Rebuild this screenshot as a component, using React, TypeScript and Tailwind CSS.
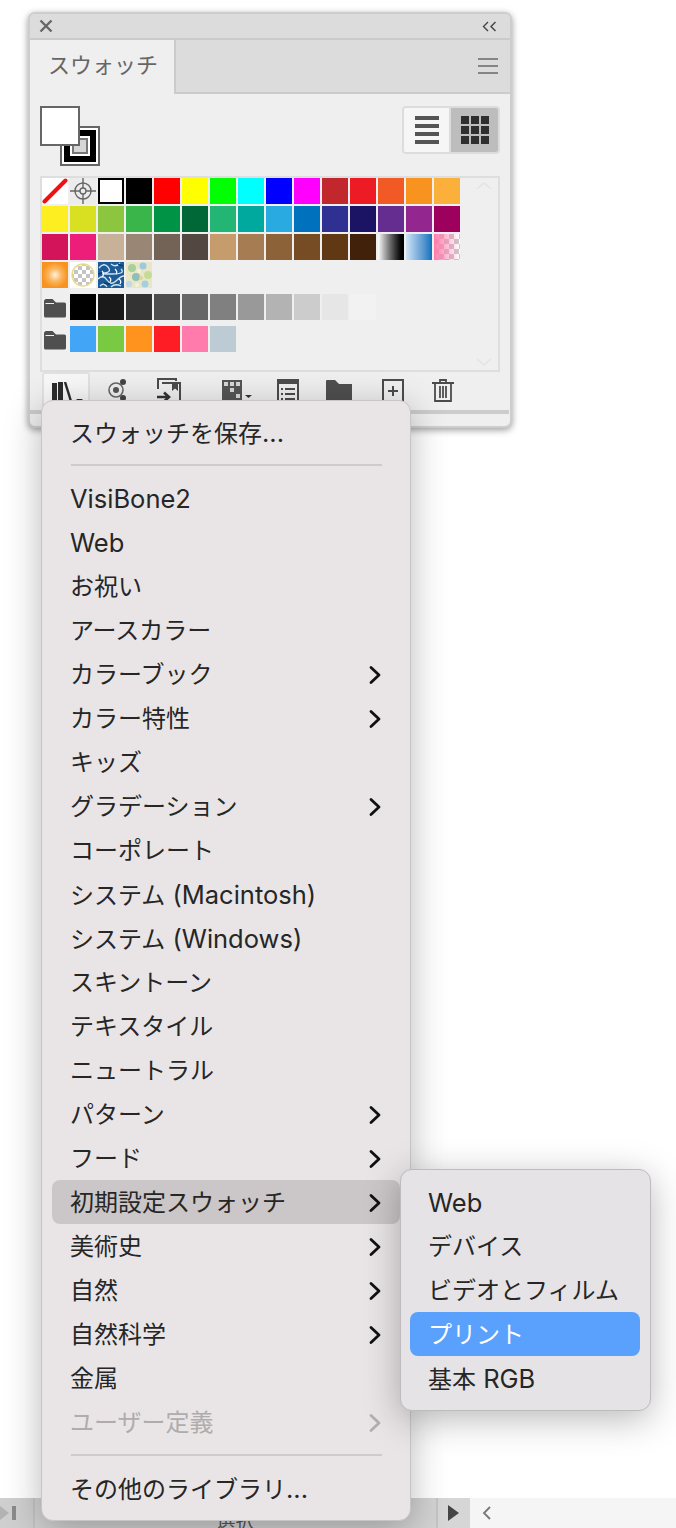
import React from "react";

const rowA = ["bg-[#ff0000]","bg-[#ffff00]","bg-[#00ff00]","bg-[#00ffff]","bg-[#0000ff]","bg-[#ff00ff]","bg-[#c1272d]","bg-[#ed1c24]","bg-[#f15a24]","bg-[#f7931e]","bg-[#fbb03b]"];
const rowB = ["bg-[#fcee21]","bg-[#d9e021]","bg-[#8cc63f]","bg-[#39b54a]","bg-[#009245]","bg-[#006837]","bg-[#22b573]","bg-[#00a99d]","bg-[#29abe2]","bg-[#0071bc]","bg-[#2e3192]","bg-[#1b1464]","bg-[#662d91]","bg-[#93278f]","bg-[#9e005d]"];
const rowC = ["bg-[#d4145a]","bg-[#ed1e79]","bg-[#c7b299]","bg-[#998675]","bg-[#736357]","bg-[#534741]","bg-[#c69c6d]","bg-[#a67c52]","bg-[#8c6239]","bg-[#754c24]","bg-[#603813]","bg-[#42210b]"];
const grays = ["bg-[#000000]","bg-[#1a1a1a]","bg-[#333333]","bg-[#4d4d4d]","bg-[#666666]","bg-[#808080]","bg-[#999999]","bg-[#b3b3b3]","bg-[#cccccc]","bg-[#e6e6e6]","bg-[#f2f2f2]"];
const brights = ["bg-[#42a5f5]","bg-[#7ac943]","bg-[#ff931e]","bg-[#ff1d25]","bg-[#ff7bac]","bg-[#bdccd4]"];

const S = ({ c }: { c: string }) => <div className={`w-[26px] h-[26px] ${c}`} />;

const Checker = ({ a = "#fff", b = "#ccc", s = 6 }: { a?: string; b?: string; s?: number }) => {
  const cells = [];
  for (let y = 0; y < 26; y += s) for (let x = 0; x < 26; x += s) cells.push(<rect key={x + "-" + y} x={x} y={y} width={s} height={s} fill={(x + y) / s % 2 === 0 ? a : b} />);
  return <>{cells}</>;
};

const Folder = () => (
  <svg width="24" height="22" viewBox="0 0 24 22" className="block ml-[1px]">
    <path d="M1 5.5Q1 3 3.5 3H9.5L13 6.5H21.5Q23 6.5 23 8V20Q23 21.5 21.5 21.5H2.5Q1 21.5 1 20Z" fill="#4f4f4f" />
    <path d="M2.5 7.5H11" stroke="#efefef" strokeWidth="1" />
  </svg>
);

const Chevron = ({ dim }: { dim?: boolean }) => (
  <svg width="14" height="20" viewBox="0 0 14 20" className="block">
    <path d="M3 2.5L11 10L3 17.5" fill="none" stroke={dim ? "#b3afb0" : "#111"} strokeWidth="2.8" strokeLinecap="round" strokeLinejoin="round" />
  </svg>
);

const Txt = ({ t }: { t: string }) => (
  <span>
    {t.split(/([A-Za-z0-9 ().]+)/).map((p, i) =>
      i % 2 === 1 ? <span key={i} className="text-[25.5px]">{p}</span> : <span key={i}>{p}</span>
    )}
  </span>
);

const Item = ({ t, sub, active, dim }: { t: string; sub?: boolean; active?: boolean; dim?: boolean }) => (
  <div className={`h-[44px] flex items-center justify-between pl-[18px] pr-[18px] pt-[2px] rounded-[8px] ${active ? "bg-[#cbc6c7]" : ""} ${dim ? "text-[#b0acad]" : "text-[#262626]"}`}>
    <Txt t={t} />
    {sub && <Chevron dim={dim} />}
  </div>
);

const Sep = () => (
  <div className="h-[22px] flex items-center pl-[19px] pr-[18px]">
    <div className="h-[2px] w-full bg-[#cfcbcc]" />
  </div>
);

export default function App() {
  return (
    <div className="relative w-[676px] h-[1528px] overflow-hidden bg-white flex flex-col justify-between font-['Inter','Noto_Sans_CJK_JP',sans-serif]">
      {/* Panel */}
      <div className="ml-[28px] mt-[12px] w-[484px] h-[416px] rounded-[7px] border-2 border-[#cdcdcd] bg-[#efefef] shadow-[0_2px_7px_rgba(0,0,0,0.4)] overflow-hidden flex flex-col">
        <div className="h-[26px] shrink-0 bg-[#dcdcdc] border-b-2 border-[#cbcbcb] flex items-center justify-between pl-[9px] pr-[13px]">
          <svg width="14" height="14" viewBox="0 0 14 14"><path d="M1.5 1.5L12.5 12.5M12.5 1.5L1.5 12.5" stroke="#666" strokeWidth="2.4" /></svg>
          <svg width="15" height="11" viewBox="0 0 15 11"><path d="M6 1L1.5 5.5L6 10M13.5 1L9 5.5L13.5 10" fill="none" stroke="#444" strokeWidth="1.4" /></svg>
        </div>
        <div className="h-[54px] shrink-0 flex">
          <div className="w-[146px] border-r-2 border-[#cbcbcb] bg-[#efefef] pl-[18px] pt-[10px] text-[22px] leading-[30px] text-[#666]">スウォッチ</div>
          <div className="flex-1 bg-[#dcdcdc] border-b-2 border-[#cbcbcb] flex items-center justify-end pr-[12px]">
            <div className="w-[20px] flex flex-col gap-[5px]">
              <div className="h-[2px] bg-[#858585]" /><div className="h-[2px] bg-[#858585]" /><div className="h-[2px] bg-[#858585]" />
            </div>
          </div>
        </div>
        <div className="mt-[12px] mx-[10px] h-[60px] shrink-0 flex justify-between">
          <div className="relative w-[60px] h-[60px]">
            <div className="absolute right-0 bottom-0 w-[40px] h-[40px] border-2 border-[#666] bg-black flex items-center justify-center">
              <div className="w-[36px] h-[36px] border-2 border-white bg-black flex items-center justify-center">
                <div className="w-[20px] h-[20px] border-2 border-white flex items-center justify-center">
                  <div className="w-[16px] h-[16px] border-2 border-[#777] bg-[#d6d6d6]" />
                </div>
              </div>
            </div>
            <div className="absolute left-0 top-0 w-[40px] h-[40px] border-2 border-[#666] bg-white" />
          </div>
          <div className="w-[98px] h-[48px] rounded-[4px] border-2 border-[#dcdcdc] flex overflow-hidden">
            <div className="w-[47px] border-r-2 border-[#dcdcdc] bg-[#f6f6f6] flex flex-col items-center justify-center gap-[4px]">
              <div className="w-[24px] h-[4px] bg-[#555]" /><div className="w-[24px] h-[4px] bg-[#555]" /><div className="w-[24px] h-[4px] bg-[#555]" /><div className="w-[24px] h-[4px] bg-[#555]" />
            </div>
            <div className="flex-1 bg-[#bdbdbd] flex items-center justify-center pl-[1px]">
              <div className="grid grid-cols-[repeat(3,8px)] grid-rows-[repeat(3,8px)] gap-[2px]">
                {Array.from({ length: 9 }).map((_, i) => <div key={i} className="bg-[#2f2f2f]" />)}
              </div>
            </div>
          </div>
        </div>
        {/* swatches */}
        <div className="relative mt-[10px] mx-[10px] h-[196px] shrink-0 border-2 border-[#dedede] flex flex-col">
          <div className="grid grid-cols-[repeat(15,26px)] gap-[2px]">
            <svg width="26" height="26" viewBox="0 0 26 26" className="block bg-white"><path d="M2.5 23.5L23.5 2.5" stroke="#ee1111" strokeWidth="4" strokeLinecap="round" /></svg>
            <svg width="26" height="26" viewBox="0 0 26 26" className="block bg-[#ececec]">
              <circle cx="13" cy="13" r="8" fill="none" stroke="#666" strokeWidth="1.4" />
              <circle cx="13" cy="13" r="3" fill="none" stroke="#666" strokeWidth="1.4" />
              <path d="M13 0V10M13 16V26M0 13H10M16 13H26" stroke="#666" strokeWidth="1.4" />
            </svg>
            <div className="w-[26px] h-[26px] border-[2px] border-black bg-white outline outline-1 -outline-offset-1 outline-black" />
            <S c="bg-black" />
            {rowA.map((c) => <S key={c} c={c} />)}
            {rowB.map((c) => <S key={c} c={c} />)}
            {rowC.map((c) => <S key={c} c={c} />)}
            <S c="bg-gradient-to-r from-white to-black" />
            <S c="bg-gradient-to-r from-[#cfe4f5] to-[#0071bc]" />
            <svg width="26" height="26" viewBox="0 0 26 26" className="block">
              <defs><linearGradient id="pk" x1="0" x2="1" y1="0" y2="0"><stop offset="0" stopColor="#ff7bac" /><stop offset="1" stopColor="#ff7bac" stopOpacity="0" /></linearGradient></defs>
              <Checker a="#fff" b="#c8c8c8" s={5} />
              <rect width="26" height="26" fill="url(#pk)" />
            </svg>
            <div className="w-[26px] h-[26px] bg-[radial-gradient(circle,#fff2df_0%,#fbb65f_35%,#f7931e_70%)]" />
            <svg width="26" height="26" viewBox="0 0 26 26" className="block bg-white">
              <defs><clipPath id="cc"><circle cx="13" cy="13" r="11" /></clipPath></defs>
              <g clipPath="url(#cc)"><Checker a="#fff" b="#c4c4c4" s={4} /></g>
              <circle cx="13" cy="13" r="11" fill="none" stroke="#ecd98a" strokeWidth="1.4" />
            </svg>
            <svg width="26" height="26" viewBox="0 0 26 26" className="block bg-[#1d5b96]">
              <path d="M1 6Q6 0 10 5T7 11T14 12T23 7M0 17Q5 12 9 18T18 19T26 14M13 2Q18 6 22 1M2 24Q6 20 9 25M13 25Q17 21 23 24" fill="none" stroke="#cfe4f5" strokeWidth="1.3" />
              <path d="M17 7Q20 10 18 12M4 9Q7 12 4 15M11 15Q14 17 12 20M21 17Q24 19 22 22" fill="none" stroke="#fff" strokeWidth="1.2" />
              <path d="M0 12L4 11M20 2L25 4M6 21L12 22" stroke="#0d3c6e" strokeWidth="1.5" />
            </svg>
            <svg width="26" height="26" viewBox="0 0 26 26" className="block bg-[#e9e6c8]">
              <circle cx="6" cy="6" r="4" fill="#a9cf9a" /><circle cx="17" cy="4" r="3.5" fill="#9cc9de" />
              <circle cx="22" cy="13" r="4" fill="#c6dc96" /><circle cx="10" cy="15" r="4" fill="#8fbfb6" />
              <circle cx="19" cy="22" r="3.5" fill="#a4cfe3" /><circle cx="3" cy="22" r="3" fill="#bcd8ea" /><circle cx="13" cy="9" r="2" fill="#f4f1d8" />
              <circle cx="11" cy="23" r="2" fill="#f4f1d8" /><circle cx="15" cy="16" r="2" fill="#dcd59a" />
            </svg>
          </div>
          <div className="mt-[6px] flex gap-[2px]">
            <div className="w-[26px] h-[26px] flex items-center"><Folder /></div>
            {grays.map((c) => <S key={c} c={c} />)}
          </div>
          <div className="mt-[6px] flex gap-[2px]">
            <div className="w-[26px] h-[26px] flex items-center"><Folder /></div>
            {brights.map((c) => <S key={c} c={c} />)}
          </div>
          <svg width="16" height="8" viewBox="0 0 16 8" className="absolute right-[6px] top-[4px]"><path d="M1 7L8 1L15 7" fill="none" stroke="#e4e4e4" strokeWidth="1.6" /></svg>
          <svg width="16" height="8" viewBox="0 0 16 8" className="absolute right-[6px] bottom-[4px]"><path d="M1 1L8 7L15 1" fill="none" stroke="#e4e4e4" strokeWidth="1.6" /></svg>
        </div>
        {/* toolbar */}
        <div className="h-[38px] shrink-0 flex pl-[12px] items-end">
          <div className="w-[48px] h-[38px] bg-[#f7f7f7] rounded-[3px] border-2 border-[#e1e1e1] pl-[8px] pt-[8px] overflow-hidden">
            <svg width="32" height="30" viewBox="0 0 32 30" className="block">
              <rect x="0" y="1" width="5" height="28" fill="#2c2c2c" /><rect x="6" y="0" width="5" height="29" fill="#2c2c2c" />
              <path d="M13 0L22 29" stroke="#2c2c2c" strokeWidth="2.4" /><path d="M24 17H31L27.5 20Z" fill="#2c2c2c" />
            </svg>
          </div>
          <div className="h-[38px] flex-1 relative overflow-hidden flex items-start pt-[6px]">
            <svg width="22" height="28" viewBox="0 0 22 28" className="block ml-[18px]">
              <circle cx="8" cy="12" r="7" fill="none" stroke="#666" strokeWidth="1.6" /><circle cx="8" cy="12" r="3" fill="#555" />
              <circle cx="15" cy="4" r="3" fill="#444" /><circle cx="15" cy="20" r="3" fill="#444" />
            </svg>
            <svg width="26" height="28" viewBox="0 0 26 28" className="block ml-[27px]">
              <path d="M1 11V1H19V3M5 5H23V26H14" fill="none" stroke="#4b4b4b" strokeWidth="2" /><path d="M15 5H21V13L18 10.5L15 13Z" fill="#4b4b4b" /><path d="M0 19H10M7 14.5L12 19L7 23.5" fill="none" stroke="#333" strokeWidth="2.6" />
            </svg>
            <svg width="30" height="28" viewBox="0 0 30 28" className="block ml-[39px]">
              <rect x="0" y="2" width="20" height="26" fill="#555" />
              <path d="M2 4h4v4H2zM8 4h4v4H8zM14 4h4v4h-4zM8 10h4v4H8zM14 16h4v4h-4zM8 22h4v4H8z" fill="#d8d8d8" />
              <path d="M23 17H30L26.5 20Z" fill="#333" />
            </svg>
            <svg width="22" height="28" viewBox="0 0 22 28" className="block ml-[25px]">
              <rect x="1" y="2" width="20" height="26" fill="none" stroke="#4b4b4b" strokeWidth="2" /><rect x="1" y="2" width="20" height="4" fill="#4b4b4b" />
              <path d="M4 10h2v2H4zM8 10h10v2H8zM4 15h2v2H4zM8 15h10v2H8zM4 20h2v2H4zM8 20h10v2H8z" fill="#4b4b4b" />
            </svg>
            <svg width="26" height="28" viewBox="0 0 26 28" className="block ml-[27px]">
              <path d="M0 3Q0 2 1 2H9L13 6H26V28H0Z" fill="#4f4f4f" />
            </svg>
            <svg width="22" height="24" viewBox="0 0 22 24" className="block ml-[30px]">
              <rect x="1" y="2" width="20" height="24" fill="none" stroke="#4b4b4b" strokeWidth="2" /><path d="M11 8V18M6 13H16" stroke="#4b4b4b" strokeWidth="2" />
            </svg>
            <svg width="22" height="24" viewBox="0 0 22 24" className="block ml-[28px]">
              <path d="M0 5H22M8 5V2H14V5M3 5V23H19V5M8 8V20M11 8V20M14 8V20" fill="none" stroke="#4b4b4b" strokeWidth="1.8" />
            </svg>
          </div>
        </div>
        <div className="h-[4px] shrink-0 bg-[#cccccc] mr-[1px]" />
      </div>

      {/* Bottom status strip */}
      <div className="h-[30px] shrink-0 flex text-[#555] text-[19px] leading-[24px]">
        <div className="w-[33px] bg-[#cfcfcf] flex items-center">
          <svg width="18" height="14" viewBox="0 0 18 14" className="block shrink-0"><path d="M0 0L9 7L0 14Z" fill="#b3b3b3" /><rect x="12" y="0" width="4" height="14" fill="#8a8a8a" /></svg>
        </div>
        <div className="w-[403px] bg-[#d2d2d2] border-l-2 border-[#c4c4c4] flex justify-center pt-[12px]"><span>選択</span></div>
        <div className="w-[34px] bg-[#d6d6d6] border-l-2 border-[#c4c4c4] flex items-center pl-[10px]">
          <svg width="11" height="16" viewBox="0 0 11 16" className="block"><path d="M0 0L11 8L0 16Z" fill="#444" /></svg>
        </div>
        <div className="flex-1 bg-[#f5f5f5] flex items-center pl-[12px]">
          <svg width="10" height="16" viewBox="0 0 10 16" className="block"><path d="M8 2L2 8L8 14" fill="none" stroke="#777" strokeWidth="1.8" /></svg>
        </div>
      </div>

      {/* Main menu */}
      <div className="absolute left-[41px] top-[400px] w-[370px] rounded-[12px] bg-[#e9e5e6] border border-[#c8c5c5] shadow-[0_8px_36px_rgba(0,0,0,0.28)] px-[10px] pt-[9px] pb-[10px] text-[24px] leading-[32px]">
        <Item t="スウォッチを保存..." />
        <Sep />
        <Item t="VisiBone2" />
        <Item t="Web" />
        <Item t="お祝い" />
        <Item t="アースカラー" />
        <Item t="カラーブック" sub />
        <Item t="カラー特性" sub />
        <Item t="キッズ" />
        <Item t="グラデーション" sub />
        <Item t="コーポレート" />
        <Item t="システム (Macintosh)" />
        <Item t="システム (Windows)" />
        <Item t="スキントーン" />
        <Item t="テキスタイル" />
        <Item t="ニュートラル" />
        <Item t="パターン" sub />
        <Item t="フード" sub />
        <Item t="初期設定スウォッチ" sub active />
        <Item t="美術史" sub />
        <Item t="自然" sub />
        <Item t="自然科学" sub />
        <Item t="金属" />
        <Item t="ユーザー定義" sub dim />
        <Sep />
        <Item t="その他のライブラリ..." />
      </div>

      {/* Submenu */}
      <div className="absolute left-[400px] top-[1169px] w-[251px] rounded-[12px] bg-[#e5e3e6] border border-[#bdbbbd] shadow-[0_8px_36px_rgba(0,0,0,0.28)] pl-[9px] pr-[10px] py-[10px] text-[24px] leading-[32px]">
        <Item t="Web" />
        <Item t="デバイス" />
        <Item t="ビデオとフィルム" />
        <div className="h-[44px] flex items-center pl-[18px] pt-[2px] rounded-[8px] bg-[#5aa0fd] text-white">プリント</div>
        <Item t="基本 RGB" />
      </div>
    </div>
  );
}
